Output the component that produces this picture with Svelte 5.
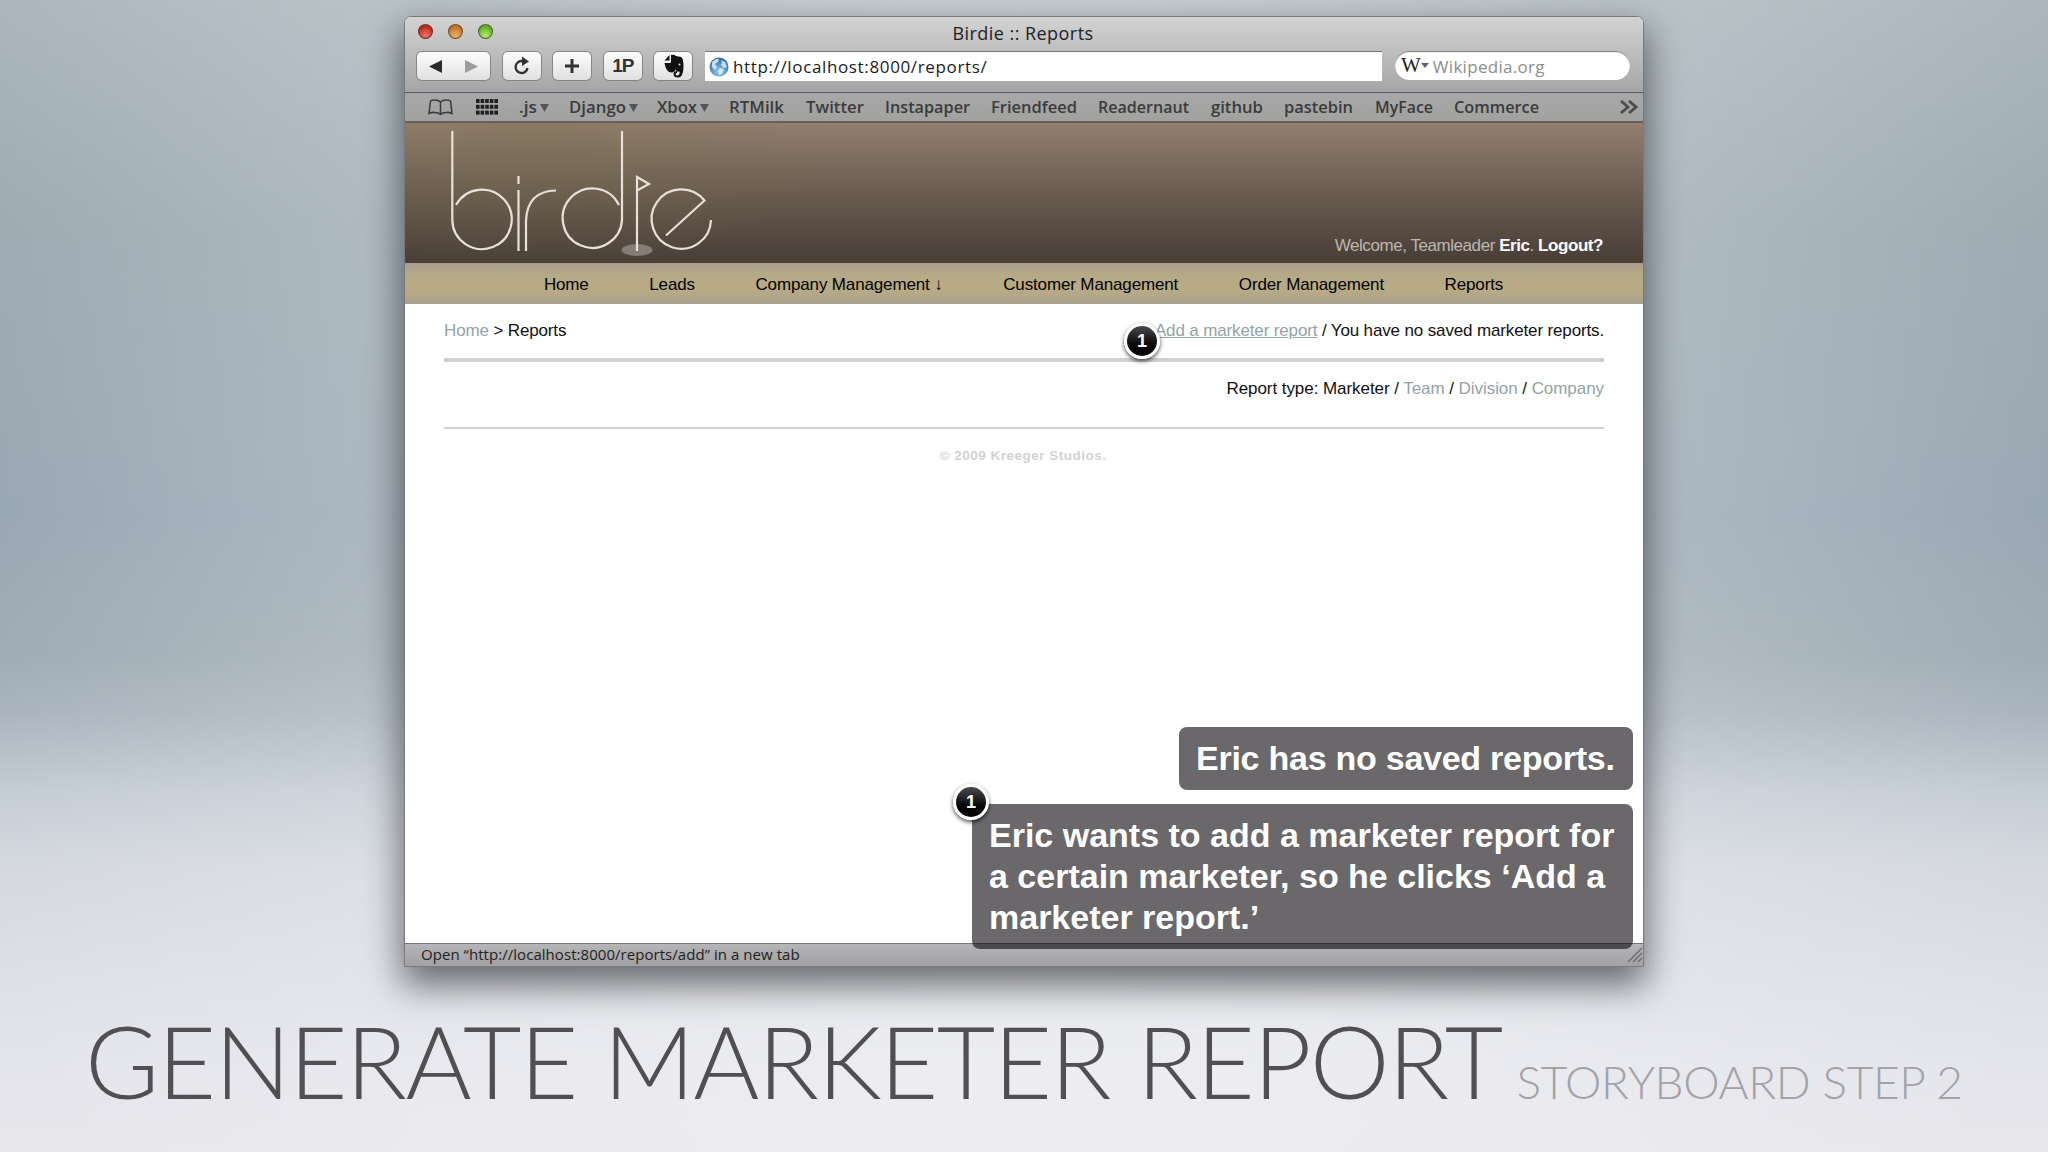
<script>
  const bookmarks = [
    { label: ".js", menu: true, x: 519, w: 30 },
    { label: "Django", menu: true, x: 569, w: 69 },
    { label: "Xbox", menu: true, x: 657, w: 52 },
    { label: "RTMilk", x: 729, w: 55 },
    { label: "Twitter", x: 806, w: 58 },
    { label: "Instapaper", x: 885, w: 85 },
    { label: "Friendfeed", x: 991, w: 86 },
    { label: "Readernaut", x: 1098, w: 91 },
    { label: "github", x: 1211, w: 52 },
    { label: "pastebin", x: 1284, w: 69 },
    { label: "MyFace", x: 1375, w: 58 },
    { label: "Commerce", x: 1454, w: 85 },
  ];

  const nav = ["Home", "Leads", "Company Management ↓", "Customer Management", "Order Management", "Reports"];
  const dots = [0, 1, 2].flatMap((r) => [0, 1, 2, 3, 4].map((c) => ({ x: c * 4.6, y: r * 5.8 })));
</script>

<main>
  <section class="window">
    <header class="chrome">
      <div class="titlebar">
        <div class="lights"><i class="red"></i><i class="amber"></i><i class="green"></i></div>
        <span class="title">Birdie :: Reports</span>
      </div>
      <div class="toolbar">
        <div class="btn wide">
          <svg width="74" height="28" viewBox="0 0 74 28"><path d="M25 8v13L12 14.500z" fill="#2b2b2b" /><path d="M48 8v13l13-6.500z" fill="#9b9b9b" /></svg>
        </div>
        <div class="btn">
          <svg width="38" height="28" viewBox="0 0 38 28"><path d="M20 9.200A6 6 0 1 0 24.500 16" fill="none" stroke="#333" stroke-width="2.400" /><path d="M19 4.500l7 5-7 4.500z" fill="#333" /></svg>
        </div>
        <div class="btn">
          <svg width="38" height="28" viewBox="0 0 38 28"><path d="M19 7v14M12 14h14" stroke="#333" stroke-width="3" /></svg>
        </div>
        <div class="btn"><b>1P</b></div>
        <div class="btn">
          <svg width="38" height="28" viewBox="0 0 38 28">
            <path d="M10.500 8.500l5-5.500v5.500zM17 3q3-1 5 1l5 1q2.500 1 2.500 9 0 11.500-5.500 11.500-4.500 0-4.500-3.500 0-3 3.500-3v2q-1.500 0-1.500 1.200t2 1.300q2.200 0 2.200-4-3.200 1-4.200-2-1 3-4 3-5.500 0-7-9.500h5.500q1 0 1-1z" fill="#111" />
            <circle cx="25.500" cy="12.500" r="1" fill="#ddd" />
          </svg>
        </div>
        <div class="address">
          <svg width="20" height="20" viewBox="0 0 20 20">
            <defs>
              <radialGradient id="globe" cx=".5" cy=".75" r=".7"><stop offset="0" stop-color="#8fd0f5" /><stop offset="1" stop-color="#2f66a8" /></radialGradient>
            </defs>
            <circle cx="10" cy="10" r="9.500" fill="url(#globe)" />
            <path d="M3 5q4-4 7-3l-1 3-3 2 2 3-2 3-3-3zM12 3l4 2 2 5-3 1-3-3 1-2zM11 11l4 1-2 5-3 1-1-4z" fill="#e9f4fb" opacity=".8" />
          </svg>
          <span class="url">http://localhost:8000/reports/</span>
        </div>
        <div class="search"><span class="wiki">W</span><i class="arrow"></i><span class="hint">Wikipedia.org</span></div>
      </div>
      <div class="bookmarks">
        <svg class="book" width="25" height="17" viewBox="0 0 25 17"><path d="M12.500 3Q10 .8 6.500 1 4 1 2.500 2L1 14.500q3-1.500 6-1 3.500 0 5.500 2 2-2 5.500-2 3-.5 6 1L22.500 2q-1.500-1-4-1-3.500-.2-6 2zv12" fill="none" stroke="#3b3b3b" stroke-width="1.500" /></svg>
        <svg class="grid" width="22" height="16" viewBox="0 0 22 16">
          {#each dots as d}<rect x={d.x} y={d.y} width="3.600" height="4" fill="#1f1f1f" />{/each}
        </svg>
        <div class="links">
          {#each bookmarks as b, i}
            <svg class="link" width={b.w} height="24" style="margin-right: {i < bookmarks.length - 1 ? bookmarks[i + 1].x - b.x - b.w : 0}px">
              <text x="0" y="18" textLength={b.menu ? b.w - 12 : b.w} lengthAdjust="spacingAndGlyphs">{b.label}</text>
              {#if b.menu}<path d="M{b.w - 9} 9h9l-4.500 8z" />{/if}
            </svg>
          {/each}
        </div>
        <svg class="more" width="18" height="14" viewBox="0 0 18 14"><path d="M1 1l7 6-7 6M9 1l7 6-7 6" fill="none" stroke="#4c4c4c" stroke-width="2.800" /></svg>
      </div>
    </header>

    <div class="banner">
      <svg class="logo" width="270" height="132" viewBox="0 0 270 132" aria-label="birdie">
        <ellipse cx="187" cy="120" rx="15.500" ry="6" fill="#857c75" />
        <g fill="none" stroke="#e9e0d9" stroke-width="2.200">
          <path d="M2.300 1V90A29.700 29.700 0 1 0 6 75" />
          <path d="M68.500 46v8M68.500 60v61M76 121V91Q77 61 106 60.500" />
          <path d="M172 1V90A29.700 29.700 0 1 1 169 75" />
          <path d="M187 121V47l12 7-12 6.500" />
          <path d="M216 105.500l38.500-35A29.700 29.700 0 1 0 261 90" />
        </g>
      </svg>
      <p class="welcome">Welcome, Teamleader <b>Eric</b>. <b>Logout?</b></p>
    </div>
    <nav>
      {#each nav as item}<span>{item}</span>{/each}
    </nav>

    <div class="page">
      <div class="crumbs">
        <p><span class="soft">Home</span> &gt; Reports</p>
        <p class="actions"><u class="soft">Add a marketer report</u> / You have no saved marketer reports.<span class="badge pin">1</span></p>
      </div>
      <p class="types">Report type: Marketer / <span class="soft">Team</span> / <span class="soft">Division</span> / <span class="soft">Company</span></p>
      <p class="copyright">© 2009 Kreeger Studios.</p>
    </div>

    <footer>
      <span>Open “http://localhost:8000/reports/add” in a new tab</span>
      <svg class="grip" width="16" height="16" viewBox="0 0 16 16"><path d="M1 15L15 1M6 15l9-9M11 15l4-4" stroke="#6d6d6d" stroke-width="1.500" /></svg>
    </footer>

    <div class="notes">
      <p class="note short">Eric has no saved reports.</p>
      <p class="note long">
        Eric wants to add a marketer report for<br />a certain marketer, so he clicks ‘Add a<br />marketer report.’
        <span class="badge">1</span>
      </p>
    </div>
  </section>

  <h1><span class="big">GENERATE MARKETER REPORT</span><span class="small">STORYBOARD STEP 2</span></h1>
</main>

<style>
  :global(body) {
    margin: 0;
    overflow: hidden;
  }
  main {
    width: 2048px;
    height: 1152px;
    box-sizing: border-box;
    padding: 16px 0 0 404px;
    background:
      radial-gradient(ellipse 1100px 1500px at 50% 40%, rgba(255, 255, 255, 0.5), transparent),
      linear-gradient(#abb6bc 0, #9ba9b1 20%, #97a5b2 45%, #9daab3 57%, #a8b3bd 62%, #c4ccd4 69%, #d4d8de 75%, #dcdfe5 84%, #e4e5eb 92%, #e7e7ec);
    font-family: "Liberation Sans", Arial, sans-serif;
  }
  p,
  h1 {
    margin: 0;
    font-weight: normal;
  }
  .window {
    position: relative;
    display: flex;
    flex-direction: column;
    box-sizing: border-box;
    width: 1240px;
    height: 951px;
    border: 1px solid #76797d;
    border-radius: 7px 7px 0 0;
    background: #fff;
    box-shadow: 0 16px 36px 2px rgba(20, 20, 25, 0.6);
  }
  .chrome {
    border-radius: 6px 6px 0 0;
    background: linear-gradient(#d3d3d4, #a5a4a6 75px);
  }
  .titlebar {
    display: grid;
    height: 34px;
    place-items: center;
    grid-template-columns: 100px 1fr 100px;
  }
  .lights {
    display: flex;
    gap: 15px;
    margin: -5px 0 0 1px;
  }
  .lights i {
    width: 13px;
    height: 13px;
    border: 1px solid rgba(50, 40, 30, 0.6);
    border-radius: 50%;
    background: radial-gradient(circle at 50% 80%, #ee7464, #bd2a20 70%);
  }
  .lights .amber {
    background: radial-gradient(circle at 50% 80%, #f0b068, #c27428 70%);
  }
  .lights .green {
    background: radial-gradient(circle at 50% 80%, #b4ea70, #62ad26 70%);
  }
  .title {
    margin: -3px 2px 0 0;
    font: 18px "Open Sans", sans-serif;
    letter-spacing: 0.45px;
    color: #222;
  }
  .toolbar {
    display: flex;
    height: 41px;
    padding: 0 12px;
  }
  .btn {
    flex: none;
    box-sizing: border-box;
    width: 38px;
    height: 28px;
    margin: 1px 12.6px 0 0;
    border-radius: 5px;
    background: linear-gradient(#fdfdfd, #e0e0e1);
    box-shadow: 0 0 0 1px #858587;
    text-align: center;
  }
  .btn.wide {
    width: 73px;
  }
  .btn b {
    font-size: 19px;
    line-height: 28px;
    letter-spacing: -1px;
    color: #333;
  }
  .address {
    display: flex;
    align-items: center;
    gap: 4px;
    box-sizing: border-box;
    width: 677px;
    height: 30px;
    padding-left: 4px;
    background: #fff;
    border-top: 1px solid #777;
  }
  .url {
    font: 17px "Open Sans", sans-serif;
    letter-spacing: 0.64px;
    color: #1b1b1b;
  }
  .search {
    display: flex;
    align-items: center;
    width: 235px;
    height: 29px;
    margin-left: 13px;
    border-radius: 15px;
    background: #fff;
    box-shadow: inset 0 1px 1px #777;
  }
  .wiki {
    margin-left: 6px;
    font: 21px "Liberation Serif", serif;
    color: #222;
  }
  .arrow {
    border: 4px solid transparent;
    border-top: 5px solid #666;
    border-bottom: 0;
  }
  .hint {
    margin-left: 4px;
    padding-top: 1px;
    font: 17px "Open Sans", sans-serif;
    letter-spacing: 0.3px;
    color: #8e8e8e;
  }
  .bookmarks {
    display: flex;
    align-items: center;
    height: 28px;
    padding-left: 23px;
    border-top: 1px solid #5c5c5e;
    border-bottom: 2px solid #63605d;
    background: linear-gradient(#a8a8aa, #a1a19f);
  }
  .grid {
    margin: 0 21px 0 23px;
  }
  .links {
    display: flex;
    width: 1090px;
  }
  .link {
    overflow: visible;
  }
  .link text {
    font: 600 15.5px "Open Sans", sans-serif;
    fill: #3b3b3c;
  }
  .link path {
    fill: #555;
  }
  .more {
    margin-left: auto;
    margin-right: 5px;
  }
  .banner {
    display: flex;
    justify-content: space-between;
    align-items: flex-end;
    height: 140px;
    padding: 0 40px 0 45px;
    background:
      radial-gradient(ellipse 300px 130px at 130px 25px, rgba(118, 110, 70, 0.3), transparent),
      linear-gradient(#927f70, #6a5c50 50%, #483e37);
  }
  .logo {
    margin-bottom: 1px;
  }
  .welcome {
    margin-bottom: 7px;
    font-size: 17px;
    letter-spacing: -0.44px;
    color: #bdb6b1;
  }
  .welcome b {
    color: #fff;
  }
  nav {
    display: flex;
    justify-content: center;
    align-items: center;
    gap: 60.6px;
    height: 39px;
    padding: 2px 1px 0 0;
    background: linear-gradient(#aa9f8c, #b6a986 30%, #b8ab85 65%, #aaa18e);
    font-size: 17px;
    letter-spacing: -0.14px;
  }
  .page {
    flex: 1;
    padding: 0 39px;
    font-size: 17px;
    letter-spacing: -0.14px;
    color: #111;
  }
  .soft {
    color: #93a3a6;
  }
  .crumbs {
    display: flex;
    justify-content: space-between;
    height: 54px;
    border-bottom: 4px solid #cfced0;
    line-height: 54px;
  }
  .actions {
    position: relative;
  }
  .types {
    height: 65px;
    border-bottom: 2px solid #cfced0;
    line-height: 54px;
    letter-spacing: -0.06px;
    text-align: right;
  }
  .copyright {
    padding: 19px 2px 0 0;
    font-size: 13.5px;
    font-weight: bold;
    letter-spacing: 0.5px;
    text-align: center;
    color: #d2d2d3;
  }
  .badge {
    position: absolute;
    left: -19px;
    top: -20px;
    box-sizing: border-box;
    width: 36px;
    height: 36px;
    border: 3px solid #fff;
    border-radius: 50%;
    background: linear-gradient(#4a4a4c, #050506 65%);
    box-shadow: 0 2px 4px rgba(0, 0, 0, 0.7);
    font: bold 18px/30px "Liberation Sans", sans-serif;
    text-align: center;
    color: #fff;
  }
  .badge.pin {
    left: -31px;
    top: 19px;
  }
  footer {
    display: flex;
    justify-content: space-between;
    align-items: center;
    height: 22px;
    padding-left: 16px;
    border-top: 1px solid #77777a;
    background: linear-gradient(#b5b4b6, #a2a1a4);
    font: 15px/20px "Open Sans", sans-serif;
    letter-spacing: 0.05px;
    color: #222;
  }
  footer span {
    padding-bottom: 2px;
  }
  .notes {
    position: absolute;
    right: 10px;
    bottom: 17px;
    display: flex;
    flex-direction: column;
    align-items: flex-end;
    gap: 14px;
  }
  .note {
    position: relative;
    box-sizing: border-box;
    padding: 11px 17px;
    border-radius: 8px;
    background: rgba(6, 4, 8, 0.6);
    font-size: 34px;
    font-weight: bold;
    line-height: 41px;
    white-space: nowrap;
    color: #fff;
  }
  .short {
    width: 454px;
    letter-spacing: -0.25px;
  }
  .long {
    width: 661px;
    height: 145px;
  }
  h1 {
    display: flex;
    align-items: baseline;
    margin: 33px 0 0 -319px;
    font-family: Lato, sans-serif;
    line-height: 120px;
    white-space: nowrap;
  }
  .big {
    font-size: 101px;
    font-weight: 300;
    letter-spacing: -1.7px;
    word-spacing: 1px;
    color: #505054;
  }
  .small {
    margin-left: 15px;
    font-size: 46px;
    font-weight: 300;
    letter-spacing: -0.4px;
    color: #a3a3a7;
  }
</style>
